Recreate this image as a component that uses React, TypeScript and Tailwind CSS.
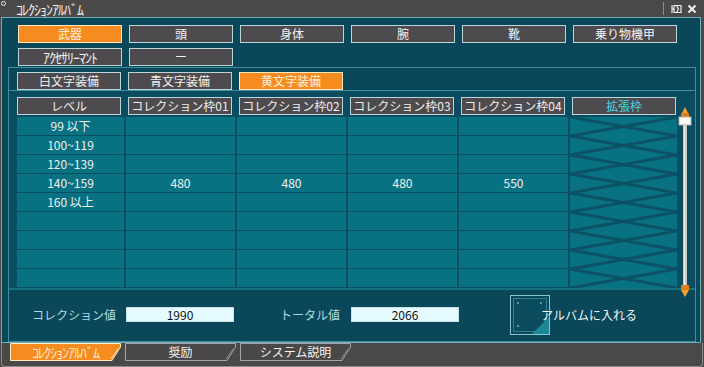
import React from "react";

function Btn({ label, active = false, half = false }: { label: string; active?: boolean; half?: boolean }) {
  return (
    <div
      className={
        active
          ? "w-[104px] h-[18px] flex items-center justify-center border border-[#fde9c2] bg-[#f68b1f] text-[#fff3dc]"
          : "w-[104px] h-[18px] flex items-center justify-center border border-[#bcd5da] bg-[#4e4b4f] text-[#f2f2f2]"
      }
    >
      <span className={half ? "text-[14px] tracking-[-1px]" : ""}>{label}</span>
    </div>
  );
}

function HeadCell({ label, w, cyan = false }: { label: string; w: string; cyan?: boolean }) {
  return (
    <div className={`${w} h-[20px] flex items-start`}>
      <div
        className={
          cyan
            ? "ml-[2px] mt-[1px] w-[104px] h-[18px] flex items-center justify-center border border-[#bcd5da] bg-[#4e4b4f] text-[#3fd6e0]"
            : "ml-[2px] mt-[1px] w-[104px] h-[18px] flex items-center justify-center border border-[#bcd5da] bg-[#4e4b4f] text-[#eeeeee]"
        }
      >
        {label}
      </div>
    </div>
  );
}

function DataCol({ w, items }: { w: string; items: string[] }) {
  return (
    <div className={`${w} border-r-2 border-[#0b4e61] flex flex-col`}>
      {items.map((t, i) => (
        <div
          key={i}
          className="h-[19px] border-b border-[#0b4e61] bg-[#087282] flex items-center justify-center text-[#f0f0f0]"
        >
          {t}
        </div>
      ))}
    </div>
  );
}

function BottomTab({ label, active = false, half = false }: { label: string; active?: boolean; half?: boolean }) {
  return (
    <div className="relative w-[111px] h-[18px] flex items-center justify-center">
      <svg className="absolute inset-0" width="111" height="18" viewBox="0 0 111 18">
        <polygon
          points="0.5,0.5 110.5,0.5 110.5,4 102,17.5 0.5,17.5"
          fill={active ? "#f68b1f" : "#4a4748"}
          stroke={active ? "#fde9c2" : "#a5a5a5"}
          strokeWidth="1"
        />
        <line x1="108" y1="6" x2="101" y2="16" stroke={active ? "#fde9c2" : "#8a8a8a"} strokeWidth="1" />
      </svg>
      <span
        className={
          active
            ? half
              ? "relative text-[14px] tracking-[-1px] text-[#ffe9cc]"
              : "relative text-[#ffe9cc]"
            : "relative text-[#f4f4f4]"
        }
      >
        {label}
      </span>
    </div>
  );
}

export default function App() {
  const levels = ["99 以下", "100~119", "120~139", "140~159", "160 以上", "", "", "", ""];
  const col = (v: string) => ["", "", "", v, "", "", "", "", ""];

  return (
    <div className="w-[704px] h-[367px] bg-[#4b4948] overflow-hidden flex flex-col font-['Noto_Sans_CJK_JP','Noto_Sans',sans-serif] text-[12px] leading-none">
      {/* title bar */}
      <div className="h-[17px] flex items-center relative shrink-0">
        <div className="absolute left-[1px] top-[1px] w-[5px] h-[5px] rounded-full border border-[#e8e8e8]" />
        <div className="pl-[16px] text-[14px] tracking-[-1px] text-[#f0f0f0]">ｺﾚｸｼｮﾝｱﾙﾊﾞﾑ</div>
        <div className="ml-auto flex items-center h-full pr-[7px]">
          <div className="w-px h-[13px] bg-[#8e8c8b] mr-[7px]" />
          <svg width="11" height="10" viewBox="0 0 11 10" className="mr-[5px]">
            <path d="M1 1v8M1 5h2M3 1.5h7v7H3zM5.5 1.5l2 3.5-2 3.5" stroke="#f0f0f0" strokeWidth="1.2" fill="none" />
          </svg>
          <svg width="10" height="10" viewBox="0 0 10 10">
            <path d="M1.5 1.5l7 7M8.5 1.5l-7 7" stroke="#f0f0f0" strokeWidth="2" />
          </svg>
        </div>
      </div>

      {/* main frame */}
      <div className="ml-[1px] mr-[3px] h-[326px] shrink-0 border border-[#6fb0bc] bg-[#0a4759] flex flex-col">
        <div className="pl-[16px] pt-[7px] flex flex-col gap-[5px]">
          <div className="flex gap-[7px]">
            <Btn label="武器" active />
            <Btn label="頭" />
            <Btn label="身体" />
            <Btn label="腕" />
            <Btn label="靴" />
            <Btn label="乗り物機甲" />
          </div>
          <div className="flex gap-[7px]">
            <Btn label="ｱｸｾｻﾘｰﾏﾝﾄ" half />
            <Btn label="ー" />
          </div>
        </div>

        {/* inner frame */}
        <div className="mt-[1px] ml-[6px] mr-[4px] flex-1 border border-[#3f8f9d] flex flex-col">
          <div className="h-[23px] shrink-0 flex items-end gap-[7px] pl-[8px] border-b border-[#3f8f9d]">
            <Btn label="白文字装備" />
            <Btn label="青文字装備" />
            <Btn label="黄文字装備" active />
          </div>

          {/* table sub panel */}
          <div className="relative h-[199px] shrink-0 bg-[#0a4d60] border-b-2 border-[#16707f] pt-[5px] pl-[6px]">
            <div className="flex">
              <HeadCell w="w-[111px]" label="レベル" />
              <HeadCell w="w-[111px]" label="コレクション枠01" />
              <HeadCell w="w-[111px]" label="コレクション枠02" />
              <HeadCell w="w-[111px]" label="コレクション枠03" />
              <HeadCell w="w-[111px]" label="コレクション枠04" />
              <HeadCell w="w-[109px]" label="拡張枠" cyan />
            </div>
            <div className="flex border-l-2 border-t border-[#0b4e61] w-fit">
              <DataCol w="w-[109px]" items={levels} />
              <DataCol w="w-[111px]" items={col("480")} />
              <DataCol w="w-[111px]" items={col("480")} />
              <DataCol w="w-[111px]" items={col("480")} />
              <DataCol w="w-[111px]" items={col("550")} />
              <div className="w-[109px] border-r-2 border-[#0b4e61] bg-[#087282]">
                <svg width="107" height="171" viewBox="0 0 107 171" className="block">
                  {Array.from({ length: 9 }).map((_, i) => (
                    <g key={i} stroke="#0b5266" strokeWidth="3">
                      <line x1="0" y1={i * 19} x2="107" y2={i * 19 + 19} />
                      <line x1="0" y1={i * 19 + 19} x2="107" y2={i * 19} />
                    </g>
                  ))}
                </svg>
              </div>
            </div>

            {/* scrollbar */}
            <svg className="absolute left-[669px] top-[16px]" width="14" height="191" viewBox="0 0 14 191">
              <rect x="5" y="14" width="4" height="166" fill="#c9c9c1" />
              <rect x="6" y="14" width="1" height="166" fill="#eeeeea" />
              <polygon points="7,0 11,8 3,8" fill="#f7a030" />
              <rect x="3" y="6" width="8" height="4" fill="#e27d18" />
              <rect x="1" y="10" width="12" height="8" fill="#f8f8f4" stroke="#b8b8b0" strokeWidth="1" />
              <rect x="3" y="178" width="8" height="5" fill="#e27d18" />
              <polygon points="3,183 11,183 7,190" fill="#f7a030" />
            </svg>
          </div>

          {/* bottom fields */}
          <div className="flex-1 flex items-center pb-[2px] pl-[23px]">
            <span className="text-[#aedbe3]">コレクション値</span>
            <div className="ml-[10px] w-[108px] h-[15px] bg-[#e6fbff] border border-[#c6e4ea] flex items-center justify-center text-[#101010]">
              1990
            </div>
            <span className="ml-[46px] text-[#aedbe3]">トータル値</span>
            <div className="ml-[11px] w-[108px] h-[15px] bg-[#e6fbff] border border-[#c6e4ea] flex items-center justify-center text-[#101010]">
              2066
            </div>
            <svg className="ml-[51px] shrink-0" width="40" height="40" viewBox="0 0 40 40">
              <rect x="0.5" y="0.5" width="39" height="39" fill="#0a4759" stroke="#8cc3cc" />
              <rect x="3.5" y="3.5" width="33" height="33" fill="#0b4c5f" stroke="#2f7f8c" />
              <polygon points="39,22 39,39 22,39" fill="#1b8797" />
              <rect x="7" y="7" width="2" height="2" fill="#4c9aa6" />
              <rect x="30" y="7" width="2" height="2" fill="#4c9aa6" />
              <rect x="7" y="30" width="2" height="2" fill="#4c9aa6" />
            </svg>
            <span className="ml-[-9px] text-[#eef6f6] relative">アルバムに入れる</span>
          </div>
        </div>
      </div>

      {/* bottom tabs */}
      <div className="h-[24px] shrink-0 mx-[1px] border-x border-b border-[#8c8c8c] rounded-b-[4px] pl-[8px] flex gap-[4px] items-start">
        <BottomTab label="ｺﾚｸｼｮﾝｱﾙﾊﾞﾑ" active half />
        <BottomTab label="奨励" />
        <BottomTab label="システム説明" />
      </div>
    </div>
  );
}
